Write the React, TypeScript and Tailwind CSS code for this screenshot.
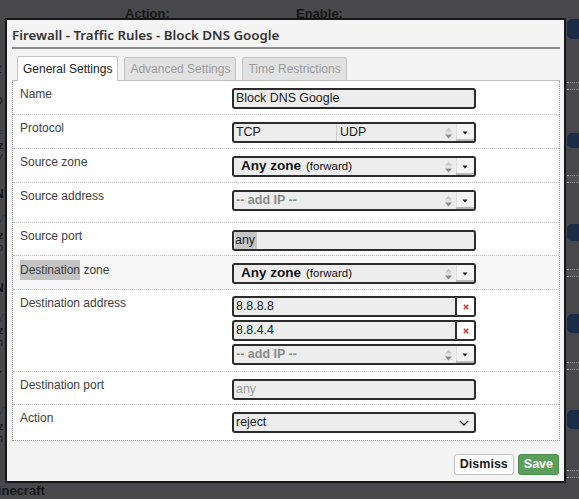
import React from "react";

function SpinArrows() {
  return (
    <svg width="9" height="14" viewBox="0 0 9 14" className="shrink-0">
      <path d="M4.5 1.5 L8 5.5 H1 Z" fill="#c8c8c8" />
      <path d="M1 7 H8" stroke="#d8d8d8" strokeWidth="0.8" />
      <path d="M4.5 12.5 L8 8.5 H1 Z" fill="#8c8c8c" />
    </svg>
  );
}

function Caret() {
  return (
    <svg width="6" height="4" viewBox="0 0 6 4">
      <path d="M0.5 0.5 H5.5 L3 3.5 Z" fill="#1e1e1e" />
    </svg>
  );
}

function Dropdown({ children }: { children: React.ReactNode }) {
  return (
    <div className="flex h-[21px] w-[244px] items-stretch overflow-hidden rounded-[3px] border-2 border-[#2c2c2c] bg-[#ededed]">
      <div className="flex min-w-0 flex-1 items-center">{children}</div>
      <div className="flex w-[16px] items-center justify-center">
        <SpinArrows />
      </div>
      <div className="flex w-[18px] items-center justify-center bg-[#f4f4f4] shadow-[inset_0_-2px_0_#b9b9b9,inset_1px_0_0_#dedede]">
        <Caret />
      </div>
    </div>
  );
}

function TextInput({
  value,
  className = "",
  valueClass = "",
}: {
  value: string;
  className?: string;
  valueClass?: string;
}) {
  return (
    <div
      className={
        "flex h-[21px] w-[244px] items-center rounded-[3px] border-2 border-[#2c2c2c] bg-[#ededed] pl-[2px] text-[12.4px] " +
        className
      }
    >
      <span className={"leading-[17px] " + valueClass}>{value}</span>
    </div>
  );
}

function RemovableItem({ value }: { value: string }) {
  return (
    <div className="flex h-[21px] w-[244px]">
      <div className="flex flex-1 items-center rounded-l-[3px] border-2 border-[#2c2c2c] bg-[#ededed] pl-[2px] text-[12.4px] text-[#222]">
        {value}
      </div>
      <div className="flex w-[19px] items-center justify-center rounded-r-[3px] border-y-2 border-r-2 border-[#2c2c2c] bg-white">
        <svg width="6" height="6" viewBox="0 0 6 6">
          <path d="M0.8 0.8 L5.2 5.2 M5.2 0.8 L0.8 5.2" stroke="#c0392b" strokeWidth="1.4" />
        </svg>
      </div>
    </div>
  );
}

function Row({
  label,
  h,
  children,
  className = "",
  labelPt = "pt-[5px]",
}: {
  label: React.ReactNode;
  h: string;
  children: React.ReactNode;
  className?: string;
  labelPt?: string;
}) {
  return (
    <div className={"flex border-b border-dotted border-[#b5b5b5] pl-[7px] " + h + " " + className}>
      <div className={"w-[212px] shrink-0 leading-[16px] text-[#404040] " + labelPt}>{label}</div>
      <div className="flex flex-col gap-[4px] pt-[7px]">{children}</div>
    </div>
  );
}

function ZoneValue() {
  return (
    <div className="flex items-baseline pl-[7px] text-[#111]">
      <span className="text-[13.5px] font-bold">Any zone</span>
      <span className="ml-[5px] text-[11.5px]">(forward)</span>
    </div>
  );
}

export default function App() {
  return (
    <div className="relative h-[499px] w-[579px] overflow-hidden bg-[#48484c] font-['Liberation_Sans',Arial,sans-serif] text-[12px]">
      {/* background page (dimmed) */}
      <div className="absolute left-[125px] top-[4px] text-[13px] font-bold text-[#161616]">Action:</div>
      <div className="absolute left-[296px] top-[4px] text-[13px] font-bold text-[#161616]">Enable:</div>
      <div className="absolute left-[-13px] top-[481px] text-[13px] font-bold text-[#161616]">Minecraft</div>
      <div className="absolute left-[-6px] top-[62px] text-[12px] leading-[14px] text-[#1c1c1c]">rt</div>
      <div className="absolute left-[-4px] top-[93px] text-[12px] leading-[14px] text-[#1c1c1c]">o</div>
      <div className="absolute left-[-3px] top-[126px] text-[12px] leading-[12px] text-[#22365a]">=</div>
      <div className="absolute left-[-2px] top-[140px] text-[11px] leading-[10px] font-bold text-[#1c1c1c]">z</div>
      <div className="absolute left-[-3px] top-[151px] text-[11px] leading-[10px] italic text-[#1c1c1c]">v</div>
      <div className="absolute left-[-5px] top-[187px] text-[12px] leading-[14px] font-bold text-[#111]">N</div>
      <div className="absolute left-[0px] top-[213px] text-[11px] leading-[12px] italic text-[#22365a]">/</div>
      <div className="absolute left-[-2px] top-[230px] text-[11px] leading-[10px] font-bold text-[#1c1c1c]">z</div>
      <div className="absolute left-[-3px] top-[242px] text-[11px] leading-[10px] italic text-[#1c1c1c]">n</div>
      <div className="absolute left-[-5px] top-[281px] text-[12px] leading-[14px] font-bold text-[#111]">N</div>
      <div className="absolute left-[0px] top-[311px] text-[11px] leading-[12px] italic text-[#22365a]">/</div>
      <div className="absolute left-[-2px] top-[325px] text-[11px] leading-[10px] font-bold text-[#1c1c1c]">z</div>
      <div className="absolute left-[-3px] top-[337px] text-[11px] leading-[10px] italic text-[#1c1c1c]">n</div>
      <div className="absolute left-[-3px] top-[367px] text-[12px] leading-[14px] font-bold text-[#111]">r</div>
      <div className="absolute left-[0px] top-[405px] text-[11px] leading-[12px] italic text-[#22365a]">/</div>
      <div className="absolute left-[-2px] top-[421px] text-[11px] leading-[10px] font-bold text-[#1c1c1c]">z</div>
      <div className="absolute left-[-3px] top-[433px] text-[11px] leading-[10px] italic text-[#1c1c1c]">n</div>

      {/* right side page fragments */}
      <div className="absolute left-[567px] top-[19px] h-[20px] w-[20px] rounded-[5px] bg-[#1b2c48]" />
      <div className="absolute left-[567px] top-[133px] h-[15px] w-[20px] rounded-[5px] bg-[#1b2c48]" />
      <div className="absolute left-[567px] top-[224px] h-[17px] w-[20px] rounded-[5px] bg-[#1b2c48]" />
      <div className="absolute left-[567px] top-[314px] h-[19px] w-[20px] rounded-[5px] bg-[#1b2c48]" />
      <div className="absolute left-[567px] top-[410px] h-[19px] w-[20px] rounded-[5px] bg-[#1b2c48]" />
      {[82, 175, 269, 362, 470].map((y) => (
        <div key={y} className="absolute left-[567px] h-[8px] w-[14px] border-y border-dotted border-[#9a9a9a] bg-[#505054]" style={{ top: y }} />
      ))}

      {/* modal */}
      <div className="absolute left-[5px] top-[18px] flex h-[465px] w-[561px] flex-col border-2 border-[#161616] bg-[#f4f4f4] pl-[5px] pr-[4px]">
        <div className="pt-[5px] font-['Noto_Sans',sans-serif] text-[13.3px] font-semibold leading-[20px] text-[#333]">
          Firewall - Traffic Rules - Block DNS Google
        </div>
        <div className="mt-[2px] h-[2px] w-full bg-[#8c8c8c]" />

        {/* tabs */}
        <div className="mt-[8px] flex h-[24px] items-end gap-[6px] border-b border-[#bdbdbd] pl-[5px]">
          <div className="relative top-[1px] flex h-[25px] items-center rounded-t-[3px] border-x border-t border-[#c4c4c4] bg-white px-[5px] text-[#222]">
            General Settings
          </div>
          <div className="flex h-[23px] items-center rounded-t-[3px] border-x border-t border-[#c4c4c4] bg-[#e2e2e2] px-[5px] text-[#9a9a9a]">
            Advanced Settings
          </div>
          <div className="flex h-[23px] items-center rounded-t-[3px] border-x border-t border-[#c4c4c4] bg-[#e2e2e2] px-[5px] text-[#9a9a9a]">
            Time Restrictions
          </div>
        </div>

        {/* panel */}
        <div className="border-x border-b border-dotted border-[#9c9c9c] bg-white">
          <Row label="Name" h="h-[34px]">
            <TextInput value="Block DNS Google" valueClass="text-[#1a1a1a]" />
          </Row>
          <Row label="Protocol" h="h-[34px]">
            <Dropdown>
              <div className="flex h-full w-[103px] items-center border-r border-[#cfcfcf] pl-[2px] text-[12.4px] text-[#1a1a1a]">TCP</div>
              <div className="pl-[3px] text-[12.4px] text-[#1a1a1a]">UDP</div>
            </Dropdown>
          </Row>
          <Row label="Source zone" h="h-[34px]">
            <Dropdown>
              <ZoneValue />
            </Dropdown>
          </Row>
          <Row label="Source address" h="h-[40px]">
            <Dropdown>
              <div className="pl-[2px] text-[12.5px] font-bold text-[#8a8a8a]">-- add IP --</div>
            </Dropdown>
          </Row>
          <Row label="Source port" h="h-[33px]">
            <TextInput value="any" valueClass="bg-[#c6c6c6] pr-[2px] text-[#222]" className="!pl-[1px]" />
          </Row>
          <Row
            label={
              <span>
                <span className="inline-block bg-[#c4c4c4] py-[2px] leading-[16px]">Destination</span> zone
              </span>
            }
            h="h-[34px]"
            className="bg-[#f7f7f7]"
            labelPt="pt-[4px]"
          >
            <Dropdown>
              <ZoneValue />
            </Dropdown>
          </Row>
          <Row label="Destination address" h="h-[82px]">
            <div className="-mt-[1px] flex flex-col gap-[3px]">
              <RemovableItem value="8.8.8.8" />
              <RemovableItem value="8.8.4.4" />
              <Dropdown>
                <div className="pl-[2px] text-[12.5px] font-bold text-[#8a8a8a]">-- add IP --</div>
              </Dropdown>
            </div>
          </Row>
          <Row label="Destination port" h="h-[33px]">
            <TextInput value="any" valueClass="text-[#9a9a9a]" />
          </Row>
          <Row label="Action" h="h-[35px]" className="!border-b-0">
            <div className="flex h-[21px] w-[244px] items-center justify-between rounded-[3px] border-2 border-[#2c2c2c] bg-[#ededed] pl-[2px] pr-[5px] text-[12.4px] text-[#1a1a1a]">
              <span>reject</span>
              <svg width="10" height="6" viewBox="0 0 10 6">
                <path d="M1 1 L5 5 L9 1" fill="none" stroke="#222" strokeWidth="1.3" />
              </svg>
            </div>
          </Row>
        </div>

        {/* footer */}
        <div className="mt-[13px] flex justify-end gap-[4px] pr-[1px]">
          <div className="flex h-[21px] items-center rounded-[3px] border border-[#bfbfbf] bg-white px-[5px] text-[12.5px] font-bold text-[#1a1a1a]">
            Dismiss
          </div>
          <div className="flex h-[21px] items-center rounded-[3px] border border-[#4b8a4b] bg-[#5b9f5b] px-[5px] text-[12.5px] font-bold text-white">
            Save
          </div>
        </div>
      </div>
    </div>
  );
}
